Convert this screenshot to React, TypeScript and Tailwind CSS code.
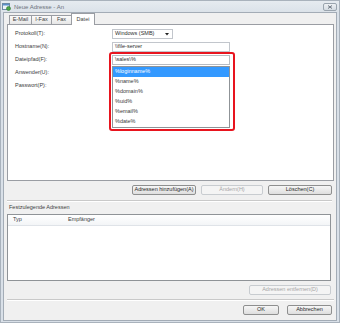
import React from 'react';

const font = { fontFamily: '"Liberation Sans", Arial, sans-serif' };

function Btn({ label, w, disabled }: { label: string; w: string; disabled?: boolean }) {
  return (
    <div
      className={`${w} h-[10px] flex items-center justify-center rounded-[2px] border text-[5.5px] leading-none ${
        disabled
          ? 'border-[#c8ccd0] bg-[#f4f4f4] text-[#a6a6a6]'
          : 'border-[#8e8f8f] bg-gradient-to-b from-[#f6f6f6] to-[#dedede] text-[#2a2a2a]'
      }`}
    >
      {label}
    </div>
  );
}

function Groove() {
  return <div className="h-[2px] border-t border-[#c9c9c9] border-b border-b-white" />;
}

export default function App() {
  const tabs = [
    { name: 'E-Mail', w: 'w-[23px]' },
    { name: 'I-Fax', w: 'w-[21px]' },
    { name: 'Fax', w: 'w-[21px]' },
  ];
  const vars = ['%loginname%', '%name%', '%domain%', '%uid%', '%email%', '%date%'];

  return (
    <div className="w-[340px] h-[323px] bg-[#d9e0e8] border border-[#a9b2bc] flex flex-col" style={font}>
      {/* Title bar */}
      <div className="h-[11px] flex items-center pl-[1px] pr-[2px] bg-gradient-to-b from-[#e6ebf0] to-[#dbe2e9]">
        <svg width="9" height="9" viewBox="0 0 9 9" className="shrink-0">
          <rect x="0.5" y="1.5" width="7" height="6" fill="#eef4fa" stroke="#6d8aa6" />
          <rect x="1" y="2" width="6" height="1.5" fill="#5b8fc9" />
          <circle cx="6.5" cy="6.5" r="2" fill="#4aa548" stroke="#2f7a31" strokeWidth="0.6" />
        </svg>
        <span className="ml-[3px] text-[6px] leading-none text-[#6c737b]">Neue Adresse - An</span>
        <div className="ml-auto w-[14px] h-[8px] rounded-[2px] border border-[#9aa4ae] bg-gradient-to-b from-[#eef1f4] to-[#d4dbe2] flex items-center justify-center">
          <svg width="6" height="4" viewBox="0 0 6 4">
            <path d="M1 0.5 L5 3.5 M5 0.5 L1 3.5" stroke="#6d7680" strokeWidth="1" />
          </svg>
        </div>
      </div>

      {/* Client area */}
      <div className="flex-1 mx-[2px] mb-[1px] border border-[#a3acb6] bg-[#f0f0f0] flex flex-col pl-[3px] pr-[2px] text-[5.5px] leading-none text-[#3e3e3e]">
        {/* Tabs */}
        <div className="h-[11px] flex items-end pl-[2px]">
          {tabs.map((t) => (
            <div
              key={t.name}
              className={`${t.w} h-[9px] -mr-px border border-b-0 border-[#9a9da3] bg-gradient-to-b from-[#fbfbfb] to-[#e6e6e6] flex items-center justify-center`}
            >
              {t.name}
            </div>
          ))}
          <div className="w-[24px] h-[12px] -mb-px relative z-10 border border-b-0 border-[#9a9da3] bg-white flex items-center justify-center">
            Datei
          </div>
        </div>

        {/* Panel */}
        <div className="h-[157px] border border-[#9a9da3] bg-white relative pl-[7px] pt-[4px]">
          <div className="flex flex-col gap-[3px]">
            <div className="h-[10px] flex items-center">
              <span className="w-[97px]">Protokoll(T):</span>
              <div className="w-[61px] h-[10px] border border-[#c2c6cc] bg-white flex items-center pl-[2px] pr-[3px]">
                <span className="text-[#2e2e2e]">Windows (SMB)</span>
                <svg width="4" height="3" viewBox="0 0 4 3" className="ml-auto">
                  <path d="M0 0 H4 L2 2.5 Z" fill="#222" />
                </svg>
              </div>
            </div>
            <div className="h-[10px] flex items-center">
              <span className="w-[97px]">Hostname(N):</span>
              <div className="w-[118px] h-[10px] border border-[#c2c6cc] bg-white flex items-center pl-[2px] text-[#2e2e2e]">
                \\file-server
              </div>
            </div>
            <div className="h-[10px] flex items-center">
              <span className="w-[97px]">Dateipfad(F):</span>
              <div className="w-[118px] h-[10px] border border-[#b8bcc2] bg-white flex items-center pl-[2px] text-[#2e2e2e]">
                \sales\%
              </div>
            </div>
            <div className="h-[10px] flex items-center">
              <span className="w-[97px]">Anwender(U):</span>
              <div className="w-[118px] h-[10px] border border-[#c2c6cc] bg-white" />
            </div>
            <div className="h-[10px] flex items-center">
              <span className="w-[97px]">Passwort(P):</span>
              <div className="w-[118px] h-[10px] border border-[#c2c6cc] bg-white" />
            </div>
          </div>

          {/* Dropdown suggestions */}
          <div className="absolute left-[104px] top-[41px] w-[118px] border border-[#8f9397] bg-white z-10">
            {vars.map((v, i) => (
              <div
                key={v}
                className={`h-[10px] flex items-center pl-[2px] ${i === 0 ? 'bg-[#3399ff] text-white' : 'text-[#3a3a3a]'}`}
              >
                {v}
              </div>
            ))}
          </div>

          {/* Red highlight */}
          <div className="absolute left-[101px] top-[27px] w-[126px] h-[79px] border-2 border-[#e8141e] rounded-[3px] z-20" />
        </div>

        {/* Address buttons */}
        <div className="mt-[4px] pr-[2px] flex justify-end gap-[5px]">
          <Btn label="Adressen hinzufügen(A)" w="w-[64px]" />
          <Btn label="Ändern(H)" w="w-[62px]" disabled />
          <Btn label="Löschen(C)" w="w-[64px]" />
        </div>

        <div className="mt-[5px] pr-[2px]">
          <Groove />
        </div>

        <div className="h-[12px] flex items-center pl-[2px]">Festzulegende Adressen</div>

        {/* Address list */}
        <div className="mr-[3px] h-[67px] border border-[#8f9397] bg-white">
          <div className="h-[11px] flex items-center border-b border-[#dfe3e8] bg-gradient-to-b from-white to-[#f3f5f7]">
            <span className="w-[60px] pl-[5px]">Typ</span>
            <span>Empfänger</span>
          </div>
        </div>

        <div className="mt-[4px] pr-[3px] flex justify-end">
          <Btn label="Adressen entfernen(D)" w="w-[82px]" disabled />
        </div>

        <div className="mt-[4px]">
          <Groove />
        </div>

        <div className="mt-[4px] pr-[2px] flex justify-end gap-[8px]">
          <Btn label="OK" w="w-[36px]" />
          <Btn label="Abbrechen" w="w-[45px]" />
        </div>
      </div>
    </div>
  );
}
